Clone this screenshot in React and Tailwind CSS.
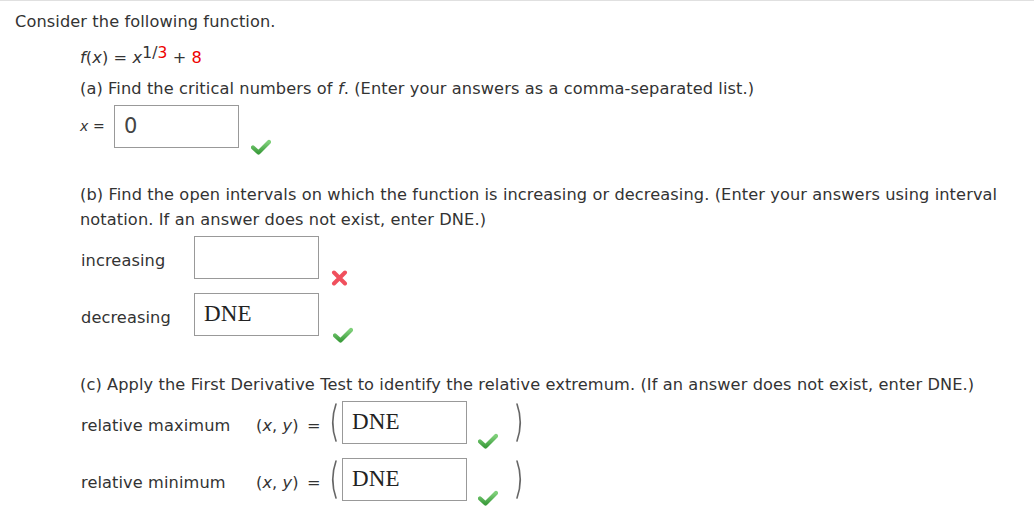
import React from 'react'

const sans = { fontFamily: '"DejaVu Sans", Verdana, sans-serif' }
const serif = { fontFamily: '"Liberation Serif", "Times New Roman", serif' }

function Check() {
  return (
    <svg width="20" height="16" viewBox="0 0 20 16" className="shrink-0">
      <defs>
        <linearGradient id="gk" x1="0" y1="0" x2="0" y2="1">
          <stop offset="0" stopColor="#7fd07a" />
          <stop offset="1" stopColor="#3e9e3e" />
        </linearGradient>
      </defs>
      <path d="M2 8.5 L7.5 13.5 L18 3" fill="none" stroke="url(#gk)" strokeWidth="4.2" strokeLinecap="round" strokeLinejoin="round" />
    </svg>
  )
}

function Cross() {
  return (
    <svg width="17" height="16" viewBox="0 0 17 16" className="shrink-0">
      <path d="M3 2.5 L14 13.5 M14 2.5 L3 13.5" fill="none" stroke="#f0505d" strokeWidth="4" strokeLinecap="round" />
    </svg>
  )
}

function Box({ value, isSerif }) {
  return (
    <div className="w-[125px] h-[43px] border border-[#999] bg-white flex items-center pl-[9px] shrink-0">
      {value && (
        <span className={isSerif ? 'text-[23px] text-[#222]' : 'text-[21px] text-[#444]'} style={isSerif ? serif : sans}>
          {value}
        </span>
      )}
    </div>
  )
}

// thin math-style delimiters
function Paren({ right }) {
  return (
    <svg width="10" height="43" viewBox="0 0 10 43" className="shrink-0">
      <path
        d={right ? 'M2 3 Q8.5 21.5 2 40' : 'M8 3 Q1.5 21.5 8 40'}
        fill="none"
        stroke="#666"
        strokeWidth="1.6"
        strokeLinecap="round"
      />
    </svg>
  )
}

export default function App() {
  return (
    <div className="w-[1034px] h-[531px] bg-white border-t border-[#e0e0e0] text-[#333] text-[16.2px] tracking-[0.1px]" style={sans}>
      <div className="pl-[15px] pt-[10px] h-[22px] leading-[22px] box-content">Consider the following function.</div>

      <div className="pl-[80px]">
        <div className="mt-[14px] h-[22px] leading-[22px]">
          <i>f</i>(<i>x</i>) = <i>x</i>
          <sup className="text-[15.5px] relative -top-[5px]">1/<span className="text-[#e00]">3</span></sup>
          {' + '}
          <span className="text-[#e00]">8</span>
        </div>

        <div className="mt-[9px] h-[22px] leading-[22px]">
          (a) Find the critical numbers of <i>f</i>. (Enter your answers as a comma-separated list.)
        </div>

        <div className="mt-[5px] flex items-center">
          <span className="text-[14px] w-[34px]"><i>x</i> =</span>
          <Box value="0" />
          <span className="ml-[12px] self-end mb-[-7px]"><Check /></span>
        </div>

        <div className="mt-[34px] leading-[25px]">
          (b) Find the open intervals on which the function is increasing or decreasing. (Enter your answers using interval
          <br />
          notation. If an answer does not exist, enter DNE.)
        </div>

        <div className="mt-[4px] flex items-start">
          <span className="w-[114px] mt-[13px] pl-[1px]">increasing</span>
          <Box />
          <span className="ml-[12px] mt-[34px]"><Cross /></span>
        </div>

        <div className="mt-[7px] flex items-start">
          <span className="w-[114px] mt-[13px] pl-[1px]">decreasing</span>
          <Box value="DNE" isSerif />
          <span className="ml-[14px] mt-[34px]"><Check /></span>
        </div>

        <div className="mt-[31px] h-[22px] leading-[22px]">
          (c) Apply the First Derivative Test to identify the relative extremum. (If an answer does not exist, enter DNE.)
        </div>

        {['relative maximum', 'relative minimum'].map((label, i) => (
          <div key={label} className={`${i === 0 ? 'mt-[5px]' : 'mt-[9px]'} flex items-start`}>
            <span className="w-[176px] mt-[13px] pl-[1px] shrink-0">{label}</span>
            <span className="mt-[13px] w-[72px] shrink-0 whitespace-nowrap">(<i>x</i>, <i>y</i>) <span className="ml-[3px]">=</span></span>
            <span className="mr-[4px]"><Paren /></span>
            <Box value="DNE" isSerif />
            <span className="ml-[11px] mt-[32px]"><Check /></span>
            <span className="ml-[17px]"><Paren right /></span>
          </div>
        ))}
      </div>
    </div>
  )
}
